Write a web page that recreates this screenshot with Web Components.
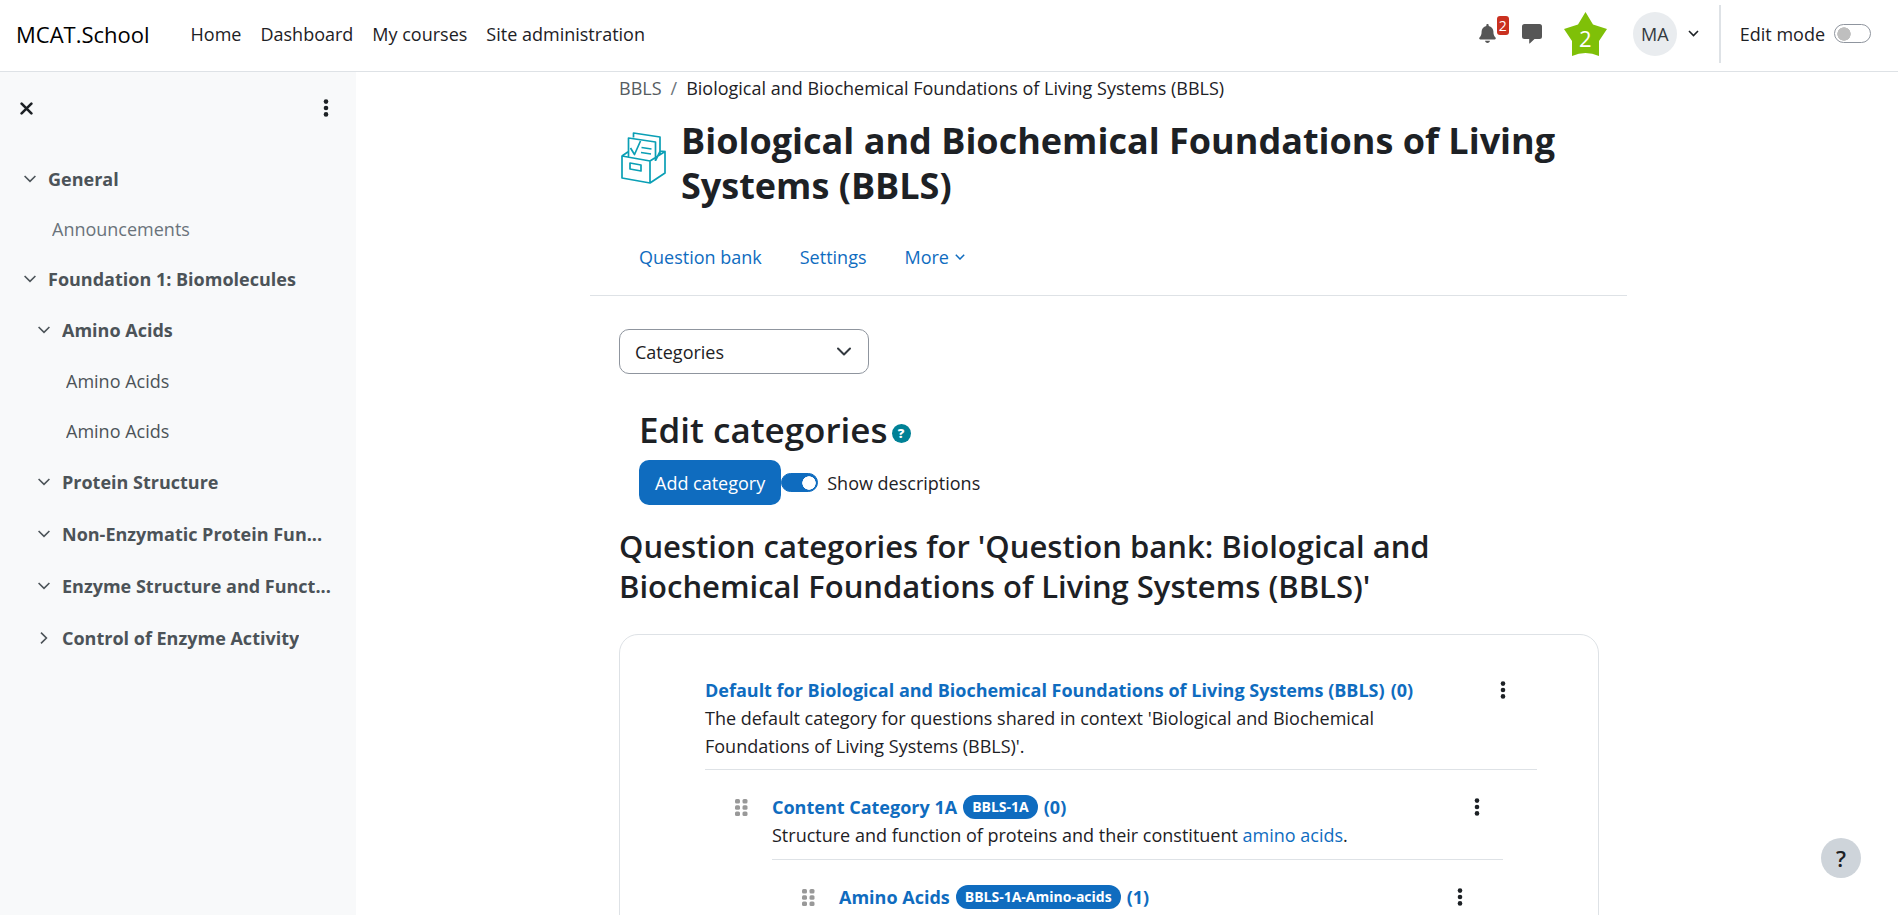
<!DOCTYPE html>
<html lang="en">
<head>
<meta charset="utf-8">
<title>Edit categories | MCAT.School</title>
<style>
  :root {
    --primary: #0f6cbf;
    --body: #1d2125;
    --muted: #4c5358;
    --border: #dee2e6;
  }
  body {
    margin: 0;
    color: var(--body);
    background: #fff;
    font: 18px/28px "Open Sans", "Noto Sans", sans-serif;
  }
</style>
</head>
<body>
<course-page>
  <site-header slot="header">
    <a href="#">Home</a>
    <a href="#">Dashboard</a>
    <a href="#">My courses</a>
    <a href="#">Site administration</a>
  </site-header>

  <course-drawer slot="drawer">
    <index-item>General</index-item>
    <index-item leaf dimmed>Announcements</index-item>
    <index-item>Foundation 1: Biomolecules</index-item>
    <index-item sub>Amino Acids</index-item>
    <index-item sub leaf>Amino Acids</index-item>
    <index-item sub leaf>Amino Acids</index-item>
    <index-item sub>Protein Structure</index-item>
    <index-item sub>Non-Enzymatic Protein Fun...</index-item>
    <index-item sub>Enzyme Structure and Funct...</index-item>
    <index-item sub collapsed>Control of Enzyme Activity</index-item>
  </course-drawer>

  <bank-header>
    <span slot="crumb">Biological and Biochemical Foundations of Living Systems (BBLS)</span>
    <span slot="title">Biological and Biochemical Foundations of Living Systems (BBLS)</span>
  </bank-header>
  <category-editor>
    <span slot="title">Question categories for 'Question bank: Biological and Biochemical Foundations of Living Systems (BBLS)'</span>
    <category-item name="Default for Biological and Biochemical Foundations of Living Systems (BBLS)" count="0">
      The default category for questions shared in context 'Biological and Biochemical Foundations of Living Systems (BBLS)'.
      <category-item slot="children" level="2" name="Content Category 1A" idnumber="BBLS-1A" count="0">
        Structure and function of proteins and their constituent <text-link>amino acids</text-link>.
        <category-item slot="children" level="3" name="Amino Acids" idnumber="BBLS-1A-Amino-acids" count="1"></category-item>
      </category-item>
    </category-item>
  </category-editor>
</course-page>

<script>
const base = `
  :host, *, ::before, ::after { box-sizing: border-box; }
  a { color: var(--primary); text-decoration: none; }
  button { font: inherit; color: inherit; background: none; border: 0; padding: 0; cursor: pointer; }
  svg { display: block; }
`;

function define(name, html, setup) {
  const template = document.createElement('template');
  template.innerHTML = html.trim();
  customElements.define(name, class extends HTMLElement {
    constructor() {
      super();
      this.attachShadow({ mode: 'open' });
      this.shadowRoot.appendChild(template.content.cloneNode(true));
      if (setup) setup(this, this.shadowRoot);
    }
  });
}

define('kebab-button', `
  <style>${base}
    :host { display: block; }
    button { display: flex; align-items: center; justify-content: center; width: 28px; height: 28px; color: var(--body); }
  </style>
  <button aria-label="Actions">
    <svg width="6" height="18" viewBox="0 0 6 18" fill="currentColor">
      <circle cx="3" cy="2.6" r="2.3"/><circle cx="3" cy="9" r="2.3"/><circle cx="3" cy="15.4" r="2.3"/>
    </svg>
  </button>
`);

define('text-link', `<style>${base}</style><a href="#"><slot></slot></a>`);

define('toggle-switch', `
  <style>${base}
    :host { display: block; }
    label { display: flex; align-items: center; gap: 9px; }
    :host([reverse]) label { flex-direction: row-reverse; }
    input {
      appearance: none;
      width: 37px;
      height: 19px;
      margin: 0;
      border: 1px solid #8f959e;
      border-radius: 10px;
      background: #fff radial-gradient(circle closest-side, #bfbfbf 92%, transparent) 2px center / 14px 14px no-repeat;
    }
    input:checked {
      border-color: var(--primary);
      background: var(--primary) radial-gradient(circle closest-side, #fff 92%, transparent) 20px center / 14px 14px no-repeat;
    }
  </style>
  <label><input type="checkbox" role="switch"><slot></slot></label>
`, (host, root) => {
  root.querySelector('input').checked = host.hasAttribute('checked');
});

define('site-header', `
  <style>${base}
    :host {
      display: flex;
      align-items: center;
      height: 72px;
      padding: 0 27px 4px 16px;
      border-bottom: 1px solid var(--border);
      background: #fff;
    }
    .brand { color: #000; font-size: 22px; margin-right: 41px; }
    nav { display: flex; gap: 19px; flex: 1; }
    ::slotted(a) { color: var(--body); text-decoration: none; }
    .tools { display: flex; align-items: center; }
    .bell { position: relative; color: #565656; margin-right: 26px; }
    .badge {
      position: absolute;
      left: 18px;
      top: -8px;
      width: 12px;
      height: 19px;
      border-radius: 3px;
      background: #ca3120;
      color: #fff;
      font-size: 14px;
      line-height: 19px;
      text-align: center;
    }
    .chat { color: #565656; margin-right: 22px; }
    .level { position: relative; width: 43px; height: 44px; margin-right: 26px; color: #fff; }
    .level span { position: absolute; inset: 12px 0 0; text-align: center; font-size: 22px; line-height: 28px; }
    .user { display: flex; align-items: center; gap: 11px; margin-right: 20px; }
    .avatar { width: 44px; height: 44px; border-radius: 50%; background: #e9ecef; color: #343a40; line-height: 44px; text-align: center; }
    .edit { display: flex; align-items: center; height: 58px; padding-left: 19px; border-left: 2px solid var(--border); }
  </style>
  <a class="brand" href="#">MCAT.School</a>
  <nav><slot></slot></nav>
  <div class="tools">
    <button class="bell" aria-label="Notifications">
      <svg width="17" height="19" viewBox="0 0 448 512" fill="currentColor"><path d="M224 0c-17.700 0-32 14.300-32 32v19.200C119 66 64 130.600 64 208v18.800c0 47-17.300 92.400-48.500 127.600l-7.400 8.300c-8.400 9.400-10.400 22.900-5.300 34.400S19.400 416 32 416h384c12.600 0 24-7.400 29.200-18.900s3.100-25-5.300-34.400l-7.400-8.300C401.300 319.200 384 273.900 384 226.800V208c0-77.400-55-142-128-156.800V32c0-17.700-14.300-32-32-32zm45.300 493.300c12-12 18.700-28.300 18.700-45.300H160c0 17 6.700 33.300 18.700 45.300S207 512 224 512s33.300-6.700 45.300-18.700z"/></svg>
      <span class="badge">2</span>
    </button>
    <button class="chat" aria-label="Messages">
      <svg width="20" height="20" viewBox="0 0 20 20" fill="currentColor"><path d="M2.500 0h15A2.500 2.500 0 0 1 20 2.500v10a2.500 2.500 0 0 1-2.500 2.500h-5L8 19.300q-.8.600-.8-.4V15H2.500A2.500 2.500 0 0 1 0 12.500v-10A2.500 2.500 0 0 1 2.500 0z"/></svg>
    </button>
    <div class="level">
      <svg width="43" height="44" viewBox="0 0 43 44"><path fill="#7fc008" d="M21.500 0 29 12.500 43 17 35 29 35 44Q21.500 38 8 44L8 29 0 17 14 12.500z"/></svg>
      <span>2</span>
    </div>
    <button class="user">
      <span class="avatar">MA</span>
      <svg width="11" height="7" viewBox="0 0 11 7" fill="none" stroke="#1d2125" stroke-width="1.600"><path d="M1 1l4.500 4.500L10 1"/></svg>
    </button>
    <div class="edit"><toggle-switch reverse>Edit mode</toggle-switch></div>
  </div>
`);

define('course-drawer', `
  <style>${base}
    :host { display: block; background: #f8f9fa; overflow: hidden; }
    header { display: flex; align-items: center; justify-content: space-between; padding: 22px 16px 32px 20px; }
    .close { width: 13px; height: 28px; }
  </style>
  <header>
    <button class="close" aria-label="Close course index">
      <svg width="13" height="13" viewBox="0 0 12 12" stroke="#1d2125" stroke-width="2.400" stroke-linecap="round"><path d="M1.500 1.500l9 9M10.500 1.500l-9 9"/></svg>
    </button>
    <kebab-button></kebab-button>
  </header>
  <nav><slot></slot></nav>
`);

define('index-item', `
  <style>${base}
    :host { display: flex; align-items: center; height: 50px; padding: 0 16px 0 24px; color: var(--muted); font-weight: 700; }
    :host([sub]) { height: 52px; padding-left: 38px; }
    button { width: 12px; height: 12px; margin-right: 12px; flex: none; }
    a { color: inherit; white-space: nowrap; overflow: hidden; text-overflow: ellipsis; }
    svg { fill: none; stroke: currentColor; stroke-width: 1.600; }
    :host([collapsed]) svg { transform: rotate(-90deg); }
    :host([leaf]) { height: 50px; padding-left: 52px; font-weight: 400; }
    :host([leaf][sub]) { padding-left: 66px; }
    :host([dimmed]) { color: #6a737b; }
    :host([leaf]) button { display: none; }
  </style>
  <button aria-label="Toggle section"><svg width="12" height="12" viewBox="0 0 12 12"><path d="M.600 3l5.400 5.400L11.400 3"/></svg></button>
  <a href="#"><slot></slot></a>
`);

define('bank-header', `
  <style>${base}
    :host { display: block; padding: 2px 29px 0; border-bottom: 1px solid var(--border); }
    .crumbs { display: flex; gap: 9px; color: #6a737b; }
    .crumbs a { color: #565c61; }
    .crumbs span { color: var(--body); }
    .title { display: flex; gap: 15px; padding: 16px 0 0 2px; }
    .title svg { flex: none; margin-top: 14px; }
    h1 { margin: 0; font-size: 36px; line-height: 45px; font-weight: 700; }
    nav { display: flex; gap: 38px; padding: 35px 20px 24px; }
    .more { display: flex; align-items: center; gap: 6px; color: var(--primary); }
  </style>
  <div class="crumbs"><a href="#">BBLS</a>/<span><slot name="crumb"></slot></span></div>
  <div class="title">
    <svg width="45" height="52" viewBox="0 0 45 52" fill="none" stroke="#0a9fb5" stroke-width="1.700" stroke-linejoin="round">
      <path d="M12.500 5.500V1l26.500 4v18M7.500 25V6l27 4v19M1 24l28 5v22L1 46zM29 29l15-9.500v21.500L29 51M1 24l6.500-4.500M39 19l5 .700M39 19.500l-4.500 9"/>
      <path d="M9 31l11 2v6L9 37z"/>
      <path d="M9.500 16l4 6.500L19.500 9M20.500 15.500l10 1.500M20 20.500l10 1.500"/>
    </svg>
    <h1><slot name="title"></slot></h1>
  </div>
  <nav>
    <a href="#">Question bank</a>
    <a href="#">Settings</a>
    <button class="more">More <svg width="10" height="6" viewBox="0 0 10 6" fill="none" stroke="currentColor" stroke-width="1.500"><path d="M.800.800L5 5 9.200.800"/></svg></button>
  </nav>
`);

define('category-editor', `
  <style>${base}
    :host { display: block; padding: 33px 28px 0 29px; }
    select {
      appearance: none;
      display: block;
      width: 250px;
      height: 45px;
      padding: 0 15px;
      border: 1px solid #8f959e;
      border-radius: 10px;
      color: inherit;
      font: inherit;
      background: #fff;
    }
    .picker { display: grid; width: max-content; align-items: center; }
    .picker > * { grid-area: 1 / 1; }
    .picker svg { justify-self: end; margin-right: 18px; pointer-events: none; }
    .heading { display: flex; align-items: center; gap: 4px; padding: 33px 20px 0; }
    h2, h3 { margin: 0; font-weight: 600; }
    h2 { font-size: 35px; line-height: 45px; }
    h3 { font-size: 31px; line-height: 40px; }
    .help {
      width: 19px;
      height: 19px;
      margin-top: 8px;
      border-radius: 50%;
      background: #008196;
      color: #fff;
      font-size: 13px;
      font-weight: 800;
      line-height: 19px;
    }
    .actions { display: flex; align-items: center; padding: 8px 20px 21px; }
    .add { height: 45px; padding: 0 16px; border-radius: 10px; background: var(--primary); color: #fff; }
    .card { margin-top: 28px; padding: 41px 61px 42px 85px; border: 1px solid var(--border); border-radius: 19px; }
  </style>
  <div class="picker">
    <select aria-label="Question bank navigation"><option>Categories</option></select>
    <svg width="14" height="9" viewBox="0 0 14 9" fill="none" stroke="#343a40" stroke-width="2" stroke-linecap="round" stroke-linejoin="round"><path d="M1 1.500l6 6 6-6"/></svg>
  </div>
  <div class="heading"><h2>Edit categories</h2><button class="help" aria-label="Help with Edit categories">?</button></div>
  <div class="actions">
    <button class="add">Add category</button>
    <toggle-switch checked>Show descriptions</toggle-switch>
  </div>
  <h3><slot name="title"></slot></h3>
  <div class="card"><slot></slot></div>
`);

define('category-item', `
  <style>${base}
    :host { display: block; }
    :host([level="2"]) { padding: 23px 34px 0 67px; }
    :host([level="3"]) { padding: 23px 17px 0 67px; }
    .item { display: grid; grid-template-columns: 1fr 28px; gap: 0 40px; padding: 0 20px 9px 0; border-bottom: 1px solid var(--border); }
    :host([level]) .item { padding: 0 12px 10px 0; }
    .name { display: flex; align-items: center; font-weight: 700; white-space: nowrap; }
    .name a { display: flex; align-items: center; gap: 6px; }
    .tag { padding: 0 9px; border-radius: 12px; background: var(--primary); color: #fff; font-size: 14px; line-height: 24px; font-weight: 700; }
    .drag { display: none; width: 13px; margin: 0 24px 0 -37px; }
    :host([level]) .drag { display: block; }
    kebab-button { grid-column: 2; grid-row: 1; }
    .description { grid-column: 1; }
  </style>
  <div class="item">
    <div class="name">
      <button class="drag" aria-label="Move category">
        <svg width="13" height="17" viewBox="0 0 13 17" fill="#999">
          <rect width="5" height="4.600" rx="1.500"/><rect x="7.500" width="5" height="4.600" rx="1.500"/>
          <rect y="6.200" width="5" height="4.600" rx="1.500"/><rect x="7.500" y="6.200" width="5" height="4.600" rx="1.500"/>
          <rect y="12.400" width="5" height="4.600" rx="1.500"/><rect x="7.500" y="12.400" width="5" height="4.600" rx="1.500"/>
        </svg>
      </button>
      <a href="#"></a>
    </div>
    <kebab-button></kebab-button>
    <div class="description"><slot></slot></div>
  </div>
  <slot name="children"></slot>
`, (host, root) => {
  const link = root.querySelector('a');
  const parts = [host.getAttribute('name'), host.getAttribute('idnumber'), `(${host.getAttribute('count')})`];
  parts.forEach((text, i) => {
    if (!text) return;
    const span = document.createElement('span');
    if (i === 1) span.className = 'tag';
    span.textContent = text;
    link.append(span);
  });
});

define('course-page', `
  <style>${base}
    :host { display: grid; grid-template: auto 1fr / 356px 1fr; height: 100vh; overflow: hidden; }
    ::slotted([slot="header"]) { grid-column: 1 / -1; }
    main { padding-right: 37px; overflow: auto; scrollbar-width: none; }
    .content { max-width: 1037px; margin: 0 auto; }
    .footer-help {
      position: absolute;
      right: 37px;
      bottom: 37px;
      width: 40px;
      height: 40px;
      border-radius: 50%;
      background: #ced4da;
      font-size: 22px;
      font-weight: 600;
    }
  </style>
  <slot name="header"></slot>
  <slot name="drawer"></slot>
  <main><div class="content"><slot></slot></div></main>
  <button class="footer-help" aria-label="Show footer">?</button>
`);
</script>
</body>
</html>
